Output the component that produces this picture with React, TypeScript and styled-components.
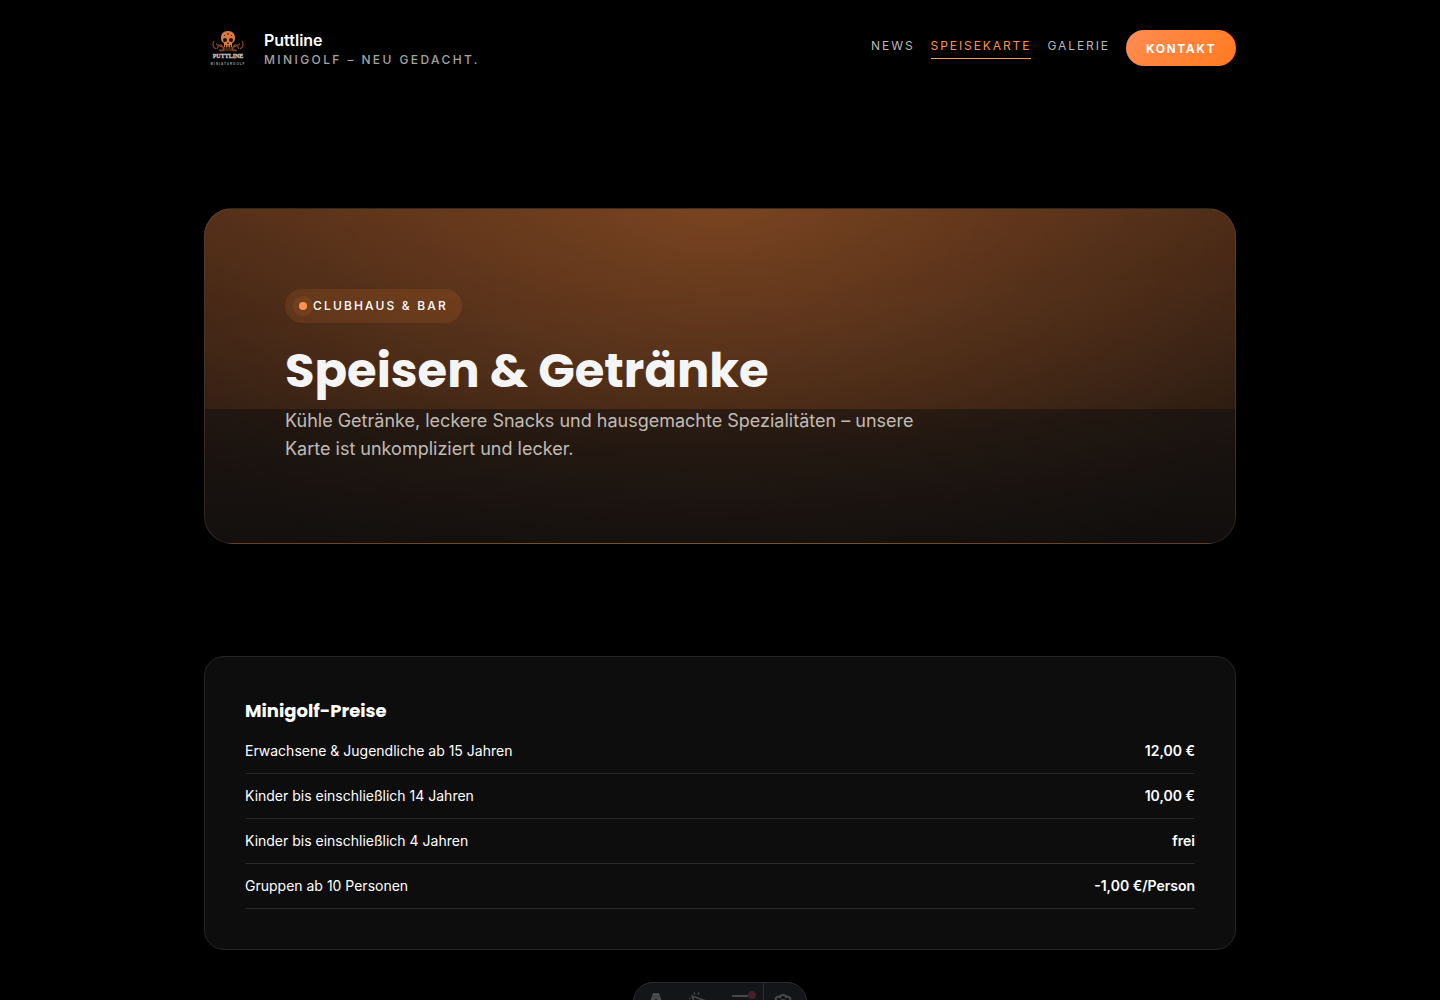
import React from "react";
import styled, { createGlobalStyle } from "styled-components";

const GlobalStyle = createGlobalStyle`
  *, *::before, *::after { box-sizing: border-box; }
  body {
    margin: 0;
    background: #000;
    color: #fff;
    font-family: Inter, "Liberation Sans", sans-serif;
    font-size: 14px;
    line-height: 20px;
    -webkit-font-smoothing: antialiased;
  }
  h1, h2, p { margin: 0; }
`;

const Container = styled.div`
  width: 100%;
  max-width: 1080px;
  margin: 0 auto;
  padding: 0 24px;
`;

const HeaderRow = styled(Container)`
  display: flex;
  align-items: center;
  justify-content: space-between;
  gap: 24px;
  padding-top: 24px;
  padding-bottom: 24px;
`;

const Brand = styled.a`
  display: flex;
  align-items: center;
  gap: 12px;
  color: #fff;
  text-decoration: none;
`;

const BrandText = styled.span`
  display: grid;
`;

const BrandName = styled.strong`
  font-size: 16px;
  font-weight: 600;
  line-height: 24px;
`;

const Tagline = styled.span`
  color: #a3a3a3;
  font-size: 12px;
  font-weight: 500;
  line-height: 16px;
  letter-spacing: 0.2em;
  text-transform: uppercase;
`;

const Nav = styled.nav`
  display: flex;
  align-items: center;
  gap: 16px;
`;

const NavLink = styled.a<{ $active?: boolean }>`
  padding-bottom: 4px;
  border-bottom: 1px solid ${(p) => (p.$active ? "#ff9a52" : "transparent")};
  color: ${(p) => (p.$active ? "#ff9350" : "#b8b8b8")};
  font-size: 12px;
  font-weight: 400;
  line-height: 16px;
  letter-spacing: 0.16em;
  text-transform: uppercase;
  text-decoration: none;
`;

const ContactButton = styled.button`
  height: 36px;
  padding: 0 20px;
  border: 0;
  border-radius: 18px;
  background: linear-gradient(135deg, #ff8c52, #ff7a1f);
  color: #fff;
  font-family: inherit;
  font-size: 12px;
  font-weight: 700;
  letter-spacing: 0.13em;
  text-transform: uppercase;
  cursor: pointer;
`;

const Main = styled(Container).attrs({ as: "main" })`
  display: grid;
  gap: 112px;
  padding-top: 112px;
  padding-bottom: 48px;
`;

const Hero = styled.section`
  position: relative;
  overflow: hidden;
  padding: 80px;
  border: 1px solid rgba(255, 255, 255, 0.08);
  border-radius: 28px;
  background:
    radial-gradient(ellipse at 50% 0, rgba(255, 140, 60, 0.27), transparent 88%),
    linear-gradient(177deg, rgba(255, 126, 50, 0.26), rgba(255, 126, 50, 0.05)),
    #0d0d0d;

  &::after {
    content: "";
    position: absolute;
    inset: 60% 0 0;
    background: linear-gradient(180deg, rgba(13, 13, 13, 0.5), rgba(13, 13, 13, 0.7));
  }
`;

const HeroContent = styled.div`
  position: relative;
  z-index: 1;
  display: grid;
  justify-items: start;
  max-width: 640px;
`;

const Pill = styled.span`
  display: inline-flex;
  align-items: center;
  gap: 6px;
  padding: 8px 14px;
  border-radius: 17px;
  background: rgba(255, 140, 56, 0.12);
  font-size: 12px;
  font-weight: 500;
  line-height: 18px;
  letter-spacing: 0.18em;
  text-transform: uppercase;
`;

const PillDot = styled.i`
  width: 8px;
  height: 8px;
  border-radius: 50%;
  background: #ff9350;
  box-shadow: 0 0 0 6px rgba(255, 140, 66, 0.1);
`;

const HeroTitle = styled.h1`
  margin: 22px 0 10px;
  color: #f5f5f5;
  font-family: Poppins, Inter, sans-serif;
  font-size: 48px;
  font-weight: 700;
  line-height: 52px;
`;

const HeroLead = styled.p`
  color: rgba(245, 240, 235, 0.76);
  font-size: 18px;
  line-height: 28px;
`;

const Card = styled.section`
  padding: 40px;
  border: 1px solid #262626;
  border-radius: 20px;
  background: #0d0d0d;
`;

const CardTitle = styled.h2`
  margin-bottom: 4px;
  font-family: Poppins, Inter, sans-serif;
  font-size: 18px;
  font-weight: 700;
  line-height: 28px;
`;

const PriceTable = styled.table`
  width: 100%;
  border-collapse: separate;
  border-spacing: 0;

  th, td {
    padding: 12px 0;
    border-bottom: 1px solid #292929;
  }
`;

const PriceLabel = styled.th`
  font-weight: 400;
  text-align: left;
`;

const PriceValue = styled.td`
  font-weight: 600;
  text-align: right;
`;

const Toolbar = styled.div`
  position: fixed;
  z-index: 10;
  bottom: -22px;
  left: 50%;
  display: flex;
  height: 40px;
  overflow: hidden;
  border: 1px solid #2b2d31;
  border-radius: 20px;
  background: #131519;
  transform: translateX(-50%);
`;

const ToolButton = styled.button<{ $divided?: boolean }>`
  display: grid;
  place-items: center;
  width: 43px;
  padding: ${(p) => (p.$divided ? "0 4px 0 0" : "0")};
  border: 0;
  border-left: ${(p) => (p.$divided ? "1px solid #2b2d31" : "0")};
  background: none;
  color: #48494d;
`;

function Logo() {
  return (
    <svg width="48" height="48" viewBox="0 0 48 48" role="img" aria-label="Puttline Logo">
      <g fill="none" stroke="#8a4a22" strokeWidth="1.2">
        <path d="M10 17c-2 3-1 7 2 8M38 17c2 3 1 7-2 8" />
        <path d="M13 25c2-5 4-5 6-2s-1 5-4 3M35 25c-2-5-4-5-6-2s1 5 4 3" />
        <path d="M12 20l6 3M36 20l-6 3M16 26h16M18 24h12" />
      </g>
      <path
        d="M24 7c-5 0-7 3-7 7 0 3 1 4 3 5v4h8v-4c2-1 3-2 3-5 0-4-2-7-7-7z"
        fill="#d97a42"
      />
      <g fill="#241008">
        <circle cx="21" cy="16" r="2" />
        <circle cx="27" cy="16" r="2" />
        <path d="M24 18l1 2h-2zM21 21h1v2h-1zM23.500 21h1v2h-1zM26 21h1v2h-1z" />
        <path d="M23.500 9h1v2h-1zM20 11h1v1h-1zM27 11h1v1h-1z" />
      </g>
      <text x="24" y="34" textAnchor="middle" fill="#c4c4c4" stroke="#c4c4c4" strokeWidth="0.300" fontFamily="Liberation Serif, serif" fontWeight="700" fontSize="6">
        PUTTLINE
      </text>
      <text x="24" y="41" textAnchor="middle" fill="#a0a0a0" fontFamily="Liberation Sans, sans-serif" fontWeight="700" fontSize="3" letterSpacing="1">
        MINIATURGOLF
      </text>
    </svg>
  );
}

const links = [
  { label: "News" },
  { label: "Speisekarte", active: true },
  { label: "Galerie" },
];

const prices = [
  ["Erwachsene & Jugendliche ab 15 Jahren", "12,00 €"],
  ["Kinder bis einschließlich 14 Jahren", "10,00 €"],
  ["Kinder bis einschließlich 4 Jahren", "frei"],
  ["Gruppen ab 10 Personen", "-1,00 €/Person"],
];

export default function App() {
  return (
    <>
      <GlobalStyle />
      <header>
        <HeaderRow>
          <Brand href="#">
            <Logo />
            <BrandText>
              <BrandName>Puttline</BrandName>
              <Tagline>Minigolf – neu gedacht.</Tagline>
            </BrandText>
          </Brand>
          <Nav>
            {links.map((l) => (
              <NavLink key={l.label} href="#" $active={l.active}>
                {l.label}
              </NavLink>
            ))}
            <ContactButton type="button">Kontakt</ContactButton>
          </Nav>
        </HeaderRow>
      </header>
      <Main>
        <Hero>
          <HeroContent>
            <Pill>
              <PillDot />
              Clubhaus &amp; Bar
            </Pill>
            <HeroTitle>Speisen &amp; Getränke</HeroTitle>
            <HeroLead>
              Kühle Getränke, leckere Snacks und hausgemachte Spezialitäten – unsere Karte ist
              unkompliziert und lecker.
            </HeroLead>
          </HeroContent>
        </Hero>
        <Card>
          <CardTitle>Minigolf-Preise</CardTitle>
          <PriceTable>
            <tbody>
              {prices.map(([label, value]) => (
                <tr key={label}>
                  <PriceLabel scope="row">{label}</PriceLabel>
                  <PriceValue>{value}</PriceValue>
                </tr>
              ))}
            </tbody>
          </PriceTable>
        </Card>
      </Main>
      <Toolbar>
        <ToolButton type="button" aria-label="Menu">
          <svg width="20" height="20" viewBox="0 0 20 20" fill="currentColor">
            <path d="M7 1h6l6 17c-2-1-4-1.500-5-1.500L10 6l-4 10.500c-1 0-3 .5-5 1.500z" />
          </svg>
        </ToolButton>
        <ToolButton type="button" aria-label="Inspect">
          <svg width="20" height="20" viewBox="0 0 20 20" fill="none" stroke="currentColor" strokeWidth="1.500">
            <path d="M3 4l14 5-6 2-3 6zM6 2.500l-1-2M9 2.500l1-2M1 7l-1-1" />
          </svg>
        </ToolButton>
        <ToolButton type="button" aria-label="Audit">
          <svg width="28" height="22" viewBox="0 0 28 22">
            <path d="M4 5h16M4 11h16M4 17h16" stroke="currentColor" strokeWidth="2" />
            <circle cx="24" cy="4" r="4" fill="#42212d" />
          </svg>
        </ToolButton>
        <ToolButton type="button" aria-label="Settings" $divided>
          <svg width="20" height="20" viewBox="0 0 20 20" fill="none" stroke="currentColor" strokeWidth="2">
            <path d="M7 5q0-2 3-2t3 2q3-1 4 1t-1 4q2 2 1 4t-4 1q0 2-3 2t-3-2q-3 1-4-1t1-4q-2-2-1-4t4-1z" />
            <circle cx="10" cy="10" r="2" />
          </svg>
        </ToolButton>
      </Toolbar>
    </>
  );
}
